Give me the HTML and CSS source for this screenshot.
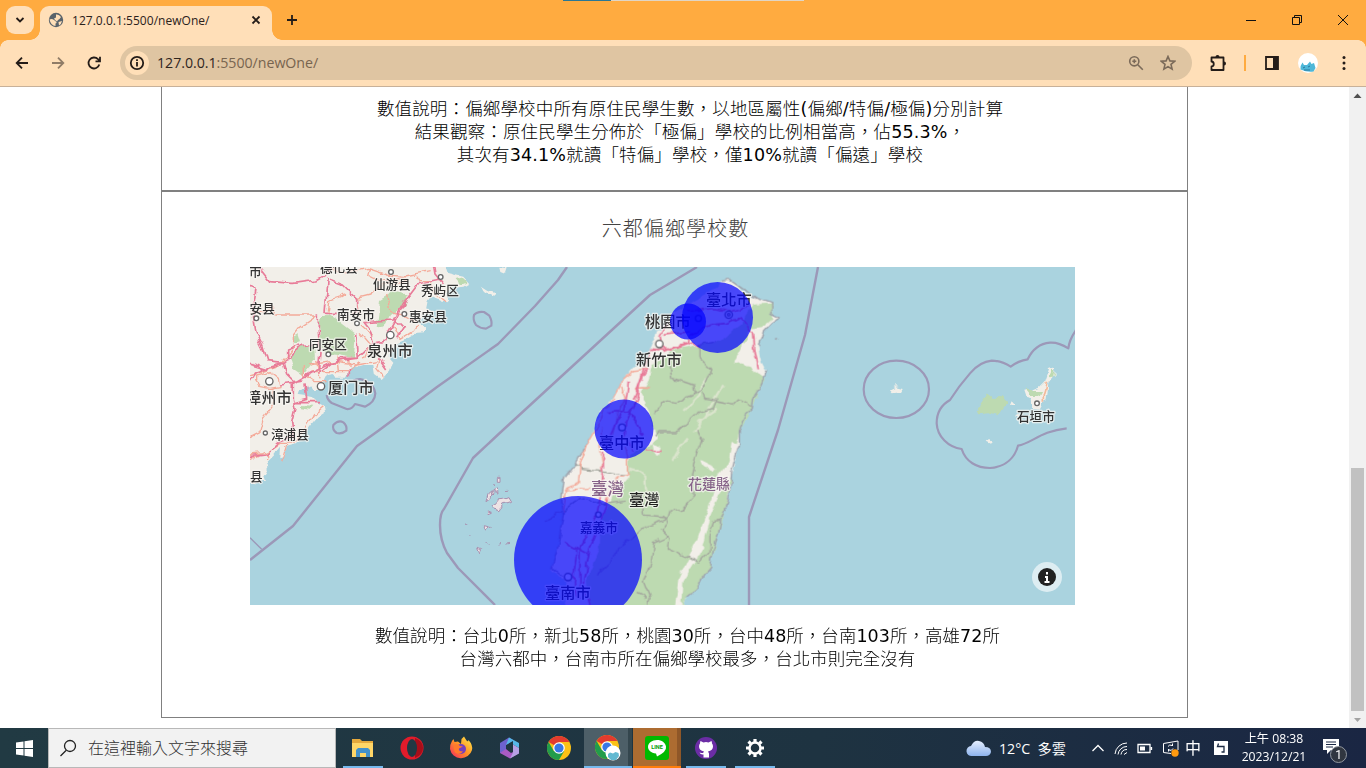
FILE: index.html
```html
<!DOCTYPE html>
<html lang="zh-Hant">
<head>
<meta charset="utf-8">
<title>127.0.0.1:5500/newOne/</title>
<link rel="stylesheet" href="styles.css">
</head>
<body>
<header class="tabstrip">
  <div class="tab-search"><svg width="12" height="12" viewBox="0 0 12 12"><path d="M2.5 4 6 7.5 9.500 4" class="ink2"/></svg></div>
  <div class="tab">
    <svg width="16" height="16" viewBox="0 0 16 16"><circle cx="8" cy="8" r="7.200" fill="#59636b"/><path d="M1.500 7.500Q4 6.500 6 8l2.500 2q.5 1-1 1.500V14Q3 14 1.500 7.500ZM8 2.500q3-.5 5 2.500l-1.500 2-1.500 1-1 1.500L7 8 6 6.500 8 5.500ZM10.500 10l3.500-1q-.5 3-3 4.500Z" fill="#ffdfb8"/></svg>
    <span class="tab-title">127.0.0.1:5500/newOne/</span>
    <svg width="12" height="12" viewBox="0 0 12 12"><path d="m2.500 2.500 7 7m0-7-7 7" class="ink2"/></svg>
  </div>
  <svg class="new-tab" width="14" height="14" viewBox="0 0 14 14"><path d="M7 2v10M2 7h10" class="ink2"/></svg>
  <div class="progress"></div>
  <div class="win-buttons">
    <svg width="12" height="12" viewBox="0 0 12 12"><path d="M1 6.500h10" class="ink1"/></svg>
    <svg width="12" height="12" viewBox="0 0 12 12"><path d="M1.500 3.500h7v7h-7zM3.500 3.500v-2h7v7h-2" class="ink1"/></svg>
    <svg width="12" height="12" viewBox="0 0 12 12"><path d="m1 1 10 10M11 1 1 11" class="ink1"/></svg>
  </div>
</header>
<nav class="toolbar">
  <svg width="16" height="16" viewBox="0 0 16 16"><path d="M14 8H3M8 2.700 2.700 8 8 13.300" class="ink2"/></svg>
  <svg class="dim" width="16" height="16" viewBox="0 0 16 16"><path d="M2 8h11M8 2.700 13.300 8 8 13.300" class="ink2"/></svg>
  <svg width="16" height="16" viewBox="0 0 16 16"><path d="M13.300 9.500A5.500 5.500 0 1 1 12 4.200L14 6.200M14 1.800V6.300H9.500" class="ink2"/></svg>
  <div class="omnibox">
    <div class="info"><svg width="16" height="16" viewBox="0 0 16 16"><circle cx="8" cy="8" r="6.200" class="ink2"/><path d="M8 7v4.500M8 4.300v1.700" class="ink2"/></svg></div>
    <span class="url">127.0.0.1<i>:5500/newOne/</i></span>
    <svg width="16" height="16" viewBox="0 0 16 16"><g class="grey"><circle cx="6.300" cy="6.300" r="4.600"/><path d="m9.800 9.800 5 5M4.300 6.300h4M6.300 4.300v4"/></g></svg>
    <svg width="16" height="16" viewBox="0 0 16 16"><path d="m8 1.500 1.900 4.400 4.800.4-3.700 3.100 1.100 4.700L8 11.600l-4.100 2.500L5 9.400 1.300 6.300l4.800-.4Z" class="grey"/></svg>
  </div>
  <svg class="ext" width="20" height="20" viewBox="0 0 20 20"><path d="M3.500 4.500h12v12.500h-12V13.500c3-.2 3-4.700 0-5Z" class="ink2" stroke-linejoin="round"/><path d="M7.500 4a2 2 0 0 1 4 0ZM16 8.500a2 2 0 0 1 0 4Z" fill="#241c18"/></svg>
  <div class="rule"></div>
  <svg class="panel" width="16" height="16" viewBox="0 0 16 16"><path d="M2 2h12v12H2z" class="ink2"/><path d="M9 2h5v12H9z" fill="#241c18"/></svg>
  <svg class="avatar" width="20" height="20" viewBox="0 0 20 20"><circle cx="10" cy="10" r="10" fill="#fff"/><path d="M2.500 16.500q-.5-4 2-7l1.500 2.500h3l3-3.500 1.500 2.500 2.500-1 1.500 5-2 3.500q-6 1-13-2Z" fill="#4eb7d8"/><path d="m5 15 2-1m3 0 2-1m-6 4h6" stroke="#28799e" fill="none"/></svg>
  <svg class="more" width="16" height="16" viewBox="0 0 16 16"><g fill="#241c18"><circle cx="8" cy="2.500" r="1.500"/><circle cx="8" cy="8" r="1.500"/><circle cx="8" cy="13.500" r="1.500"/></g></svg>
</nav>
<main class="viewport">
  <div class="page">
    <section class="card card-prev">
      <p class="note">數值說明：偏鄉學校中所有原住民學生數，以地區屬性<b>(</b>偏鄉<b>/</b>特偏<b>/</b>極偏<b>)</b>分別計算<br>結果觀察：原住民學生分佈於「極偏」學校的比例相當高，佔<b>55.3%</b>，<br>其次有<b>34.1%</b>就讀「特偏」學校，僅<b>10%</b>就讀「偏遠」學校</p>
    </section>
    <section class="card card-map">
      <h2>六都偏鄉學校數</h2>
      <svg class="map" width="825" height="338" viewBox="250 267 825 338">
        <defs><filter id="rough" x="-5%" y="-5%" width="110%" height="110%" color-interpolation-filters="sRGB"><feTurbulence type="fractalNoise" baseFrequency=".03" numOctaves="2" seed="4"/><feDisplacementMap in="SourceGraphic" scale="22" xChannelSelector="R" yChannelSelector="G"/></filter></defs>
        <rect x="250" y="267" width="825" height="338" fill="#aad3df"/>
        <g class="tiles">
        <!-- mainland coast -->
        <g transform="translate(250 265) scale(.33333)">
          <g filter="url(#rough)">
          <path class="land" d="M-40-40H575L595 25 640 35 658 55 640 65 600 70 590 85 595 112 575 110 550 98 530 105 525 130 560 142 520 155 500 170 525 190 525 205 490 207 465 222 445 230 430 255 412 270 430 290 420 320 395 345 375 330 370 300 340 300 300 312 290 335 255 335 235 320 220 350 220 375 190 375 180 360 150 375 145 390 185 395 200 410 225 425 228 440 205 455 180 485 150 525 130 540 110 545 103 575 88 580 90 545 70 570 50 590 55 610 40 635 45 650 20 655-40 650Z"/>
          <path class="land" d="M692 65 712 78 735 85 722 97 700 82ZM745 5 770 10 765 25 748 18ZM230 310l15-5 5 20-15 5Z"/>
          <path class="wood" d="M205 175 235 148 270 170 315 205 310 255 320 280 265 270 235 268 215 245ZM120 275 150 245 195 240 198 285 160 330 130 310ZM385 145 390 105 430 80 470 88 465 120 420 150 400 190 380 185ZM620 45l20-5 12 12-20 8ZM130 215l15-8 8 25-20 5ZM150 420l40 2-10 12-30-4Z"/>
          <path class="road2" d="M240 10 290 25 350 10 410 30 470 35 545 20M355 10 350 30 390 50 470 35M0 150 30 145 65 125 80 150 140 150 200 150 150 185 130 210 130 250 90 300 0 330M235 140 240 105 270 95 285 85M500 35 510 50 540 50 550 80 585 110M320 100 360 90 400 60 470 45M320 115 330 150M330 180 370 215M180 300 240 290 320 300 380 290M180 320 240 320 300 320 330 290M200 290 210 340M260 270 265 320M300 280 300 310M160 300 160 330 190 350 230 350M20 350 20 330 60 320 85 340 90 365 60 370 30 365ZM70 370 70 420 40 460 30 500 0 515M220 425 190 450 160 495 130 535 90 535 60 555 0 585M110 540 95 590M0 570 50 565 50 585M410 90 420 140 460 150 500 170M430 180 450 220 490 195 500 180M390 270 380 310 400 335M330 205 360 240 340 280"/>
          <path class="road" d="M25 5 60 50 130 55 200 45 235 25 245 0M235 40 230 90 225 145 260 145M240 45 280 60 320 100 320 135 300 150M0 60 15 75 10 110 5 140 15 200 35 240 50 290 100 295 150 245 195 240M0 295 50 310 100 295 110 330 130 350 160 345M205 145 205 200 210 260 205 320M320 205 325 280 270 280 180 325 130 355 90 360M325 275 370 235 400 230 440 160 470 100 500 60 570 45M340 170 360 195 370 235M340 170 430 165 460 110M430 160 460 190 440 220M550 0 555 30 580 60M385 280 410 315M130 350 130 400 135 430 125 470 130 520M165 355 170 400 135 410 210 410M0 575 45 570 90 530 130 515M0 350 20 320 50 310M110 290 110 255 150 240M205 325 250 290 320 280M295 315 295 335"/>
          </g>
          <path class="sea" d="M672 150Q682 138 702 141L718 152Q727 168 724 182L708 191Q690 190 678 180 668 165 672 150ZM230 390Q232 405 245 414L290 432Q305 434 315 417L345 425Q375 412 376 385 370 350 330 342 318 342 310 347M250 480Q265 464 280 472 292 482 289 497 276 508 260 504 246 494 250 480Z"/><path d="M0 818 35 853" fill="none" stroke="#9c98b8" stroke-width="4"/>
          <g class="town"><circle cx="423" cy="21" r="7"/><circle cx="572" cy="36" r="7"/><circle cx="19" cy="160" r="7"/><circle cx="321" cy="175" r="7"/><circle cx="463" cy="147" r="7"/><circle cx="235" cy="268" r="7"/><circle cx="46" cy="504" r="6"/><circle cx="421" cy="210" r="11"/><circle cx="213" cy="364" r="11"/><circle cx="58" cy="349" r="11"/></g>
        </g>
        <!-- Taiwan -->
        <g transform="translate(500 265) scale(.33333)">
          <g filter="url(#rough)">
          <path class="land" d="M690 45 711 60 730 85 770 100 812 115 813 145 840 158 817 172 790 200 775 240 780 280 800 318 790 345 777 375 760 400 757 430 735 450 718 500 718 545 705 580 695 620 690 680 680 720 662 765 655 810 640 850 632 905 610 930 590 970 560 995 540 1060H180L210 970 155 910 170 860 180 800 190 750 185 720 193 640 225 600 245 560 275 515 300 440 340 400 365 350 405 305 430 298 455 240 470 200 495 178 530 140 570 115 620 90 650 65 665 48Z"/>
          <path class="wood" d="M530 252 500 270 455 300 440 350 425 385 450 460 475 520 440 545 390 570 385 635 340 690 300 770 300 850 260 940 270 1060H540L560 995 590 970 610 930 632 905 655 810 680 720 695 620 718 500 757 430 777 375 797 340 745 302 705 295 730 240 755 190 790 185 820 160 813 118 760 122 720 180 650 230Z"/>
          <path class="land" d="M717 545 695 530 685 590 650 640 630 720 610 770 590 830 560 890 535 945 520 1060H545L550 950 600 870 630 750 665 680 700 620ZM600 585l30 15 25 10-10 12-38-20ZM455 535l30 10-10 28-15-10Z"/>
          <path class="valley" d="M620 340 590 400 550 440M650 430 600 465 585 500M560 520 530 570 510 580M390 610 435 625 440 710M670 360 610 460"/>
          <path class="county" d="M510 300 515 340 550 350 580 360 585 385 530 415 490 410 460 450M585 385 610 375 635 315 620 300 600 280 600 240 650 230M605 378 615 400 650 405 640 430 600 440 530 500 480 500 465 515M650 410 700 420 715 405 755 425M590 495 605 525 585 590 575 650 585 690 545 735 510 740 500 775 485 795 510 820 505 850 600 893 630 860 630 800 640 770 660 765M425 680 430 750 495 755 500 765M500 760 440 780 395 820 350 850 340 880 290 930M505 815 460 835 455 880 430 950 450 1000 445 1020M410 985 440 1000M225 595 245 610 300 615 375 630M190 740 240 700 310 715 380 705"/>
          <path class="coast" d="M665 48 690 45 711 60 770 100 812 115 813 145 840 158 817 172 790 200 775 240M800 318 790 345 777 375 760 400 757 430 735 450 718 500 718 545 705 580 695 620 690 680 680 720 662 765 655 810 640 850 632 905 610 930 590 970 560 995M155 910 170 860 190 750 185 700 193 640 225 600 270 520M135 770 185 735M155 905 210 950M820 220l10 4"/>
          <path class="road2" d="M340 400 370 345 400 320 440 315M345 405 310 430 300 470 260 540 240 600 235 655 200 670 190 740M195 675 270 670M310 490 300 540 310 620 300 680M365 365 375 400 350 450 330 550M375 550 385 580 385 625 350 640 320 710M405 370 430 368 445 372"/>
          <path class="road" d="M450 255 490 258 565 235 570 210 630 180 680 175 720 155 760 205 765 260 775 310M495 178 480 210 485 250 520 255M490 210 570 200M560 140 640 130 690 140 755 120M450 260 430 320 400 405M440 315 420 350 410 400 380 470 375 510 400 560M385 350 375 430 345 470 330 520M310 560 310 620 300 700 290 750 240 850 240 1000M325 700 310 750 270 850 250 950 270 1020M440 557 485 555M190 830 265 870M230 855 220 950 235 1000M325 445 390 440 430 510M530 250 580 232 600 240"/>
          </g>
          <g class="town"><circle cx="478" cy="237" r="11"/><circle cx="686" cy="149" r="11"/><circle cx="686" cy="149" r="4"/><circle cx="366" cy="487" r="10"/><circle cx="295" cy="749" r="8"/><circle cx="204" cy="936" r="11"/><circle cx="595" cy="160" r="9"/></g>
        </g>
        <!-- Penghu -->
        <g transform="translate(250 430) scale(.33333)"><path class="islets" filter="url(#rough)" d="M745 145l8 0 0 12-8 0zM730 160l5 8M708 215l6-25 10-8-4 25zM720 190l12-10-5 15zM735 180l10-4 2 16-12-4zM726 228l16-18 18-2 14-5 8 14-24 8-8 14-20-5zM715 245l12 5-10 4zM706 290l18 5-18 8zM680 352l12 4-6 12zM645 280l5 8M648 315l8 0M710 333l8 8M748 342l8-1M765 180l6 5M768 342l9-2"/></g>
        <!-- Yaeyama islands -->
        <g transform="translate(820 320) scale(.33333)">
          <g filter="url(#rough)">
          <path class="land" d="M210 208l18-9 20 5-5 10-25 3zM497 362l10-8 11 7-8 7zM555 295l10-6M570 255l5-11 10 11zM610 215l25-5 25-10 15-15 12-35 15-5 2 18-22 28-5 45-15 30-25-3-2-28-20-5zM585 292l10-5 8 12zM614 261l8-5"/>
          <path class="wood" d="M470 270 485 248 505 218 520 230 545 232 562 250 545 270 540 286 505 277 475 280ZM615 210l25 0 25 0-10 18-25 0zM688 172l8-20 7 2-4 16z"/>
          <path d="M680 185 670 220 670 248" stroke="#f3b99a" stroke-width="5" fill="none"/>
          </g>
          <ellipse class="sea" cx="229" cy="208" rx="98" ry="86"/>
          <path class="sea" d="M785-5 765 35Q748 60 745 85 715 66 690 68 645 72 623 118 595 122 572 140 545 122 515 122 480 125 450 160 415 200 390 240 350 262 350 310C352 350 385 382 425 387 437 425 470 444 510 444 560 440 585 410 594 377 635 370 662 333 740 325 752 235L772 195"/>
          <circle cx="651" cy="250" r="7" class="town"/>
        </g>
        <path class="border" d="M567 267 558 280 535 306 498 344 437 387 378 431 357 446 293 526 250 560M697 267 650 295 503 430 473 458 444 509Q440 513 440 525 440 540 447 553L458 568 495 605M818 267 805 335 778 430 749 517V605"/>
        <g class="lbl small">
          <text x="320" y="272">德化县</text><text x="373" y="289">仙游县</text><text x="421" y="295">秀屿区</text><text x="409" y="321">惠安县</text><text x="337" y="319">南安市</text><text x="309" y="349">同安区</text><text x="237" y="313">长安县</text><text x="249" y="276">市</text><text x="271" y="439">漳浦县</text><text x="250" y="481">县</text><text x="1017" y="421">石垣市</text><text x="580" y="532">嘉義市</text>
        </g>
        <g class="lbl big">
          <text x="367" y="356">泉州市</text><text x="328" y="393">厦门市</text><text x="246" y="403">漳州市</text><text x="636" y="365">新竹市</text><text x="645" y="327">桃園市</text><text x="706" y="305">臺北市</text><text x="599" y="448">臺中市</text><text x="545" y="598">臺南市</text><text class="dark" x="629" y="505">臺灣</text><text class="violet" x="591" y="495" font-size="16.500">臺灣</text><text class="violet" x="688" y="489" font-size="14">花蓮縣</text>
        </g>
        </g>
        <g fill="#00f" fill-opacity=".7"><circle cx="717.500" cy="317.500" r="35.500"/><circle cx="688" cy="321.500" r="18"/><circle cx="624" cy="429" r="29.500"/><circle cx="578" cy="560" r="64"/></g>
        <circle cx="1047" cy="577" r="15" fill="#fff" fill-opacity=".6"/><circle cx="1047" cy="577" r="9" fill="#222"/><path d="M1047 572v2.500M1047 576v6M1045 577h2M1044.500 582h5" stroke="#fff" stroke-width="2" fill="none"/>
      </svg>
      <p class="note">數值說明：台北<b>0</b>所，新北<b>58</b>所，桃園<b>30</b>所，台中<b>48</b>所，台南<b>103</b>所，高雄<b>72</b>所<br>台灣六都中，台南市所在偏鄉學校最多，台北市則完全沒有</p>
    </section>
  </div>
  <div class="scrollbar"><svg width="17" height="17" viewBox="0 0 17 17"><path d="m4.500 11 4-4.500 4 4.500Z" fill="#505050"/></svg><div class="thumb"></div><svg width="17" height="17" viewBox="0 0 17 17"><path d="m5 7 3.500 4L12 7Z" fill="#a3a3a3"/></svg></div>
</main>
<footer class="taskbar">
  <div class="start"><svg width="17" height="17" viewBox="0 0 17 17"><path d="M0 2.500 7.500 1.400V8H0ZM8.500 1.300 17 0V8H8.500ZM0 9h7.500v6.600L0 14.500ZM8.500 9H17v8l-8.500-1.200Z" fill="#fff"/></svg></div>
  <div class="search"><svg width="18" height="18" viewBox="0 0 18 18"><path d="M7 11.500 1.500 17M16.500 7A5.500 5.500 0 1 1 5.500 7a5.500 5.500 0 0 1 11 0Z" fill="none" stroke="#222" stroke-width="1.300"/></svg><span>在這裡輸入文字來搜尋</span></div>
  <div class="apps">
    <div class="app open"><svg width="24" height="24" viewBox="0 0 24 24"><path d="M1 3h8l2 2h11v16H1z" fill="#e5a93c"/><path d="M1 7h21v14H1z" fill="#ffd667"/><path d="M5 21v-7l2-2h10l2 2v7h-4v-4H9v4Z" fill="#4391cb"/></svg></div>
    <div class="app"><svg width="24" height="24" viewBox="0 0 24 24"><circle cx="12" cy="12" r="11.500" fill="#e21c2b"/><path d="M15 2q8 3 8 10t-8 10Z" fill="#a70e19"/><ellipse cx="12" cy="12" rx="5" ry="9" fill="#213943"/></svg></div>
    <div class="app"><svg width="24" height="24" viewBox="0 0 24 24"><defs><linearGradient id="ff" x1="1" y1="0" x2="0" y2="1"><stop stop-color="#fff04d"/><stop offset=".5" stop-color="#ff9226"/><stop offset="1" stop-color="#f52263"/></linearGradient></defs><path d="M3 5 4.500 3 5.500 6 9 5.500 12 8 12.500 3 15 .5 17.500 4.500 19 5.500 19.500 4Q24 9 23 14a11.300 11.300 0 0 1-22-1Q1 8 3 5Z" fill="url(#ff)"/><circle cx="12" cy="13" r="5" fill="#7540bd"/><path d="M5 9q4-2 6 1l3 .5-4 2q-1 3 4 3-3 4-8 1Q4 12 5 9Z" fill="#ff7a2c"/></svg></div>
    <div class="app"><svg width="24" height="24" viewBox="0 0 24 24"><path d="M2 7 11 1.500 15 4 8 9v8.500L2 17Z" fill="#6d62cf"/><path d="m11 1.500 10 5.500v5l-6-3.500V5L8 9Z" fill="#56b7e8"/><path d="m2 17 6-4 5 4 8-4v4l-9 5.500Z" fill="#a95bc5"/><path d="m15 8.500 6 3.500v5.500l-9 5 3-6Z" fill="#b6a0e4"/></svg></div>
    <div class="app"><svg width="24" height="24" viewBox="0 0 24 24"><g id="chrome"><circle cx="12" cy="12" r="12" fill="#fbc116"/><path d="M12 12 1.600 6A12 12 0 0 1 22.400 6H12Z" fill="#e33b2e"/><path d="M12 12 6.800 15 1.600 6a12 12 0 0 0 10.400 18l5.200-9Z" fill="#229c4b"/><circle cx="12" cy="12" r="5.800" fill="#fff"/><circle cx="12" cy="12" r="4.600" fill="#3978e5"/></g></svg></div>
    <div class="app current"><svg width="26" height="26" viewBox="0 0 26 26"><use href="#chrome"/><circle cx="18" cy="18" r="7.500" fill="#fff"/><path d="m13 19 2-1.500 3 1 2.500-1.500 3 1 .5 3-3 4h-5l-3-3Z" fill="#62b9d1"/></svg></div>
    <div class="app alert"><svg width="24" height="24" viewBox="0 0 24 24"><rect width="24" height="24" rx="3" fill="#00b900"/><path d="M12 4c-5 0-9 3-9 7 0 3 3 6 8 6.500l1 3q10-5 9-10c-1-4-4-6.500-9-6.500Z" fill="#fff"/><text x="12" y="13" text-anchor="middle" font-size="5.500" font-weight="700" fill="#009b00">LINE</text></svg></div>
    <div class="app open"><svg width="24" height="24" viewBox="0 0 24 24"><circle cx="12" cy="12" r="11" fill="#6b2da5"/><path d="M9.500 21.500v-3q-3 .5-4-2 2 .5 3.500.5l1-1.500q-5-1-5-5 0-2 1-3 0-1.500.5-2.500l3 1.500q2.500-.8 5 0l3-1.500q.5 1 .5 2.500 1 1 1 3 0 4-5 5l1 2v4Z" fill="#fff"/></svg></div>
    <div class="app open"><svg width="22" height="22" viewBox="-11 -11 22 22"><circle r="5.500" fill="none" stroke="#fff" stroke-width="2.500"/><path d="M0-6V-9M0 6V9M-6 0H-9M6 0H9M-4.300-4.300-6.500-6.500M4.300 4.300 6.500 6.500M-4.300 4.300-6.500 6.500M4.300-4.300 6.500-6.500" stroke="#fff" stroke-width="3.200"/></svg></div>
  </div>
  <div class="weather"><svg width="26" height="18" viewBox="0 0 26 18"><defs><linearGradient id="cl" x2="0" y2="1"><stop stop-color="#e5efff"/><stop offset="1" stop-color="#8db3ed"/></linearGradient></defs><path d="M6 17a5 5 0 0 1-1-10Q8 1 13 2t6 6q6 0 6 5-1 4-5 4Z" fill="url(#cl)"/></svg><span>12°C&nbsp; 多雲</span></div>
  <div class="tray">
    <svg width="14" height="16" viewBox="0 0 14 16"><path d="m1.500 11 5.500-5.500L12.500 11" class="white"/></svg>
    <svg width="14" height="16" viewBox="0 0 14 16"><path d="M1 14A12 12 0 0 1 13 3M4 14.500A9 9 0 0 1 13 6.500M7 14.500a6 6 0 0 1 6-5M10 14.500l3-2" class="white thin"/></svg>
    <svg width="16" height="16" viewBox="0 0 16 16"><path d="M1 4.500h12v8H1zM14.500 7v3" class="white"/><path d="M3 6.500h5v4H3z" fill="#fff"/></svg>
    <svg width="18" height="18" viewBox="0 0 18 18"><path d="M9 14.500 1.500 13.500V4.500L16 2v9M6 7.500q1.500-2.500 4-1l.5.500V4.500M11 9.500q-1.500 3-4 1.500L6.500 10v2.500" class="white thin"/><circle cx="13" cy="14" r="3.700" fill="#ff9a10"/></svg>
    <span class="ime">中</span>
    <svg width="16" height="16" viewBox="0 0 16 16"><path d="M1 1h14v14H1z" fill="#fff"/><path d="M5.500 3.500 4.500 6.500H11V12H8.500" fill="none" stroke="#1c2b43" stroke-width="1.300"/></svg>
  </div>
  <div class="clock">上午 08:38<br>2023/12/21</div>
  <svg class="notify" width="26" height="28" viewBox="0 0 26 28"><path d="M1 3h16v11H9l-4 4v-4H1Z" fill="#fff"/><path d="M4 6h10M4 8.500h10M4 11h7" stroke="#1b2944"/><circle cx="16.500" cy="18.500" r="8" fill="#303640" stroke="#9298a0"/><text x="16.500" y="23" text-anchor="middle" fill="#fff" font-size="12">1</text></svg>
</footer>
</body>
</html>
```
FILE: styles.css
```css
* { box-sizing: border-box; }
body { margin: 0; width: 1366px; height: 768px; overflow: hidden; display: flex; flex-direction: column; background: #fff; font-family: "Open Sans", "Noto Sans CJK TC", sans-serif; }
svg { display: block; flex: none; }
.ink1 { fill: none; stroke: #111; stroke-width: 1; }
.ink2 { fill: none; stroke: #241c18; stroke-width: 1.8; }
.grey { fill: none; stroke: #7b6a59; stroke-width: 1.6; }
.white { fill: none; stroke: #fff; stroke-width: 1.3; }
.thin { stroke-width: 1; }

.tabstrip { height: 40px; background: #ffab40; display: flex; align-items: center; position: relative; flex: none; }
.tab-search { width: 28px; height: 28px; margin-left: 6px; border-radius: 9px; background: #ffdfb8; display: flex; align-items: center; justify-content: center; }
.tab { align-self: flex-end; width: 232px; height: 34px; margin-left: 6px; padding: 0 10px 6px 8px; border-radius: 9px 9px 0 0; background: #ffdfb8; display: flex; align-items: center; position: relative; }
.tab::before, .tab::after { content: ""; position: absolute; bottom: 0; width: 10px; height: 10px; }
.tab::before { left: -10px; background: radial-gradient(circle at 0 0, transparent 9.5px, #ffdfb8 10px); }
.tab::after { right: -10px; background: radial-gradient(circle at 100% 0, transparent 9.5px, #ffdfb8 10px); }
.tab-title { flex: 1; margin-left: 8px; font-size: 12px; letter-spacing: .03px; color: #2b211b; white-space: nowrap; }
.new-tab { margin-left: 13px; }
.progress { position: absolute; left: 563px; top: 0; width: 241px; height: 1px; background: linear-gradient(90deg, #2a7795 48px, #e0d5c5 48px); }
.win-buttons { margin-left: auto; margin-right: 17px; display: flex; gap: 34px; }

.toolbar { height: 47px; background: #ffdfb8; border-bottom: 1px solid #c8b199; display: flex; align-items: center; flex: none; padding-left: 14px; position: relative; }
.toolbar::before { content: ""; position: absolute; left: 0; right: 0; top: 0; height: 8px; background: radial-gradient(circle at 100% 100%, transparent 7.5px, #ffab40 8px) left / 8px 8px no-repeat, radial-gradient(circle at 0 100%, transparent 7.5px, #ffab40 8px) right / 8px 8px no-repeat; }
.toolbar > svg + svg { margin-left: 20px; }
.dim { opacity: .5; }
.omnibox { width: 1072px; height: 34px; margin-left: 18px; padding: 0 16px 0 5px; border-radius: 17px; background: #dfc5a2; display: flex; align-items: center; gap: 16px; }
.info { width: 24px; height: 24px; border-radius: 50%; background: #ffdfb8; display: flex; align-items: center; justify-content: center; }
.url { flex: 1; margin: -2px 0 0 -8px; font-size: 14.2px; color: #30261e; letter-spacing: -.03px; }
.url i { font-style: normal; color: #77644f; }
.ext { margin-left: 16px; }
.rule { width: 2px; height: 16px; margin-left: 16px; background: #ffab40; }
.panel { margin-left: 18px; }
.toolbar .avatar { margin-left: 18px; }
.toolbar .more { margin-left: 18px; }

.viewport { height: 641px; display: flex; flex: none; overflow: hidden; }
.page { flex: 1; padding-left: 161px; }
.card { width: 1027px; border: 1px solid #808080; }
.card-prev { height: 104px; border-top: 0; padding: 11px 0 0 31px; }
.card-map { height: 527px; }
h2 { margin: 20px 0 24px 2px; text-align: center; font: 300 20px/31px "Noto Sans CJK TC", sans-serif; letter-spacing: 1.1px; color: #444; }
.map { margin-left: 88px; }
.note { margin: 0; text-align: center; white-space: nowrap; color: #000; font: 300 17.5px/23px "DejaVu Sans", "Noto Sans CJK TC", sans-serif; letter-spacing: .1px; }
.note b { font-weight: 400; }
.card-prev .note { letter-spacing: .15px; }
.card-map .note { margin: 20px 0 0 26px; letter-spacing: .03px; }

.tiles { filter: blur(.4px); }
.land { fill: #f2efe9; }
.wood { fill: #bddab1; }
.valley { fill: none; stroke: #dbe5cd; stroke-width: 7; }
.county { fill: none; stroke: #a3a69d; stroke-width: 4; }
.coast { fill: none; stroke: #9da1ab; stroke-width: 4; }
.road { fill: none; stroke: #e87b98; stroke-width: 5; stroke-linejoin: round; }
.road2 { fill: none; stroke: #f4aa99; stroke-width: 4; stroke-linejoin: round; }
.sea { fill: none; stroke: #9c98b8; stroke-width: 6.5; stroke-linejoin: round; }
.border { fill: none; stroke: #9c98b8; stroke-width: 2.4; stroke-linejoin: round; }
.islets { fill: #eee3e5; stroke: #a78fae; stroke-width: 3; }
.town { fill: #fff; stroke: #666; stroke-width: 4; }
.lbl { font-family: "Noto Sans CJK SC", sans-serif; fill: #333; stroke: #f7f5f1; stroke-opacity: .75; stroke-width: 2.5px; paint-order: stroke; stroke-linejoin: round; font-weight: 500; }
.small { font-size: 12.6px; }
.big { font-size: 15.2px; }
.lbl .dark { fill: #222; }
.lbl .violet { fill: #866389; }

.scrollbar { width: 17px; background: #f1f1f1; display: flex; flex-direction: column; }
.thumb { width: 13px; height: 243px; margin: auto 2px 0; background: #c1c1c1; }

.taskbar { height: 40px; flex: none; display: flex; color: #fff; background: linear-gradient(90deg, #213a43, #1e3341 60%, #1a2643); }
.start { width: 48px; display: flex; align-items: center; justify-content: center; }
.search { width: 288px; border: 1px solid #b8b8b8; background: #f2f2f2; color: #333; display: flex; align-items: center; padding-left: 10px; gap: 11px; font: 300 16px/38px "Noto Sans CJK TC", sans-serif; }
.search span { margin-top: -2px; }
.apps { display: flex; padding-left: 2px; }
.app { width: 49px; display: flex; align-items: center; justify-content: center; font-family: Roboto, sans-serif; }
.open { background: linear-gradient(#76b9ed, #76b9ed) 5px bottom / 40px 2px no-repeat; }
.current { background: linear-gradient(#76b9ed, #76b9ed) left bottom / 100% 2px no-repeat, linear-gradient(90deg, #4d5f68 44px, #34464e 44px); width: 48px; margin-left: 1px; }
.alert { background: linear-gradient(#ff7d0b, #ff7d0b) left bottom / 100% 2px no-repeat, linear-gradient(90deg, #ad6c31 44px, #8f5728 44px); width: 48px; margin-left: 1px; }
.weather { width: 102px; margin-left: 187px; display: flex; align-items: center; gap: 7px; font-size: 14.2px; white-space: nowrap; }
.tray { margin-left: 23px; display: flex; align-items: center; gap: 9px; }
.ime { font: 400 16px/40px "Noto Sans CJK TC", sans-serif; width: 16px; margin: -2px 4px 0 -4px; }
.tray svg:last-child { margin-left: -1px; }
.clock { width: 72px; margin-left: 9px; padding-top: 2px; font-size: 12.2px; line-height: 18px; text-align: center; white-space: nowrap; }
.notify { margin: 8px 0 0 12px; font-family: Roboto, sans-serif; }
```
